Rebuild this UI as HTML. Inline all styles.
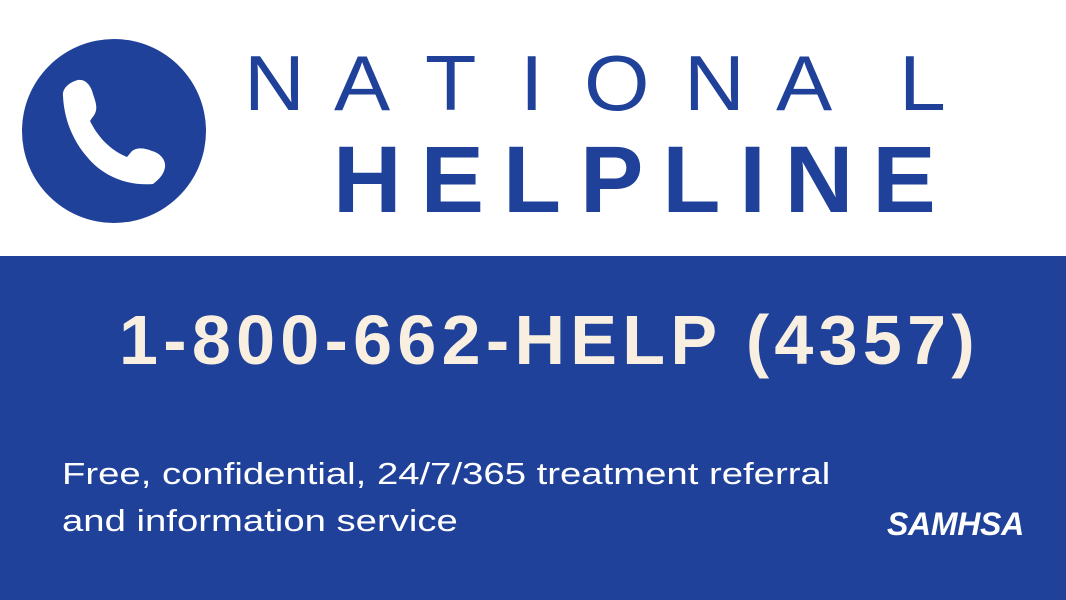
<!DOCTYPE html>
<html><head><style>
html,body{margin:0;padding:0}
body{width:1066px;height:600px;position:relative;overflow:hidden;background:#fff;font-family:"Liberation Sans",sans-serif}
.band{position:absolute;left:0;top:256px;width:1066px;height:344px;background:#20419a}
.nl{position:absolute;top:44px;font-size:78px;color:#20419a;font-weight:normal;line-height:1;transform:scaleX(1.08);transform-origin:left}
.help{position:absolute;left:333px;top:133px;font-size:95px;font-weight:bold;color:#20419a;letter-spacing:19px;line-height:1}
.num{position:absolute;left:119px;top:305px;font-size:70px;font-weight:bold;color:#f8efe0;letter-spacing:5.3px;line-height:1;white-space:nowrap}
.sub{position:absolute;left:62px;top:450px;font-size:31px;color:#fff;line-height:47px;transform:scaleX(1.235);transform-origin:left;white-space:nowrap}
.sam{position:absolute;left:887px;top:508px;font-size:32px;font-weight:bold;font-style:italic;color:#fff;line-height:1;letter-spacing:-0.3px}
</style></head><body>
<svg width="240" height="250" style="position:absolute;left:0;top:0">
<circle cx="114" cy="131" r="92" fill="#20419a"/>
<path d="M63 96 C62 88 70 82 78 80 C86 79 91 86 93 94 C96 103 99 110 92 118 L90 121 C98 137 110 150 127 157 L132 151 C137 147 145 148 152 151 C160 153 166 160 165 167 C164 175 158 180 153 184 C130 186 105 178 88 158 C72 140 64 118 63 96 Z" fill="#fff"/>
</svg>
<div class="nl" style="left:244px">N</div>
<div class="nl" style="left:334px">A</div>
<div class="nl" style="left:425px">T</div>
<div class="nl" style="left:520px">I</div>
<div class="nl" style="left:584px">O</div>
<div class="nl" style="left:684px">N</div>
<div class="nl" style="left:776px">A</div>
<div class="nl" style="left:899px">L</div>
<div class="help">HELPLINE</div>
<div class="band"></div>
<div class="num">1-800-662-HELP (4357)</div>
<div class="sub">Free, confidential, 24/7/365 treatment referral<br>and information service</div>
<div class="sam">SAMHSA</div>
</body></html>
